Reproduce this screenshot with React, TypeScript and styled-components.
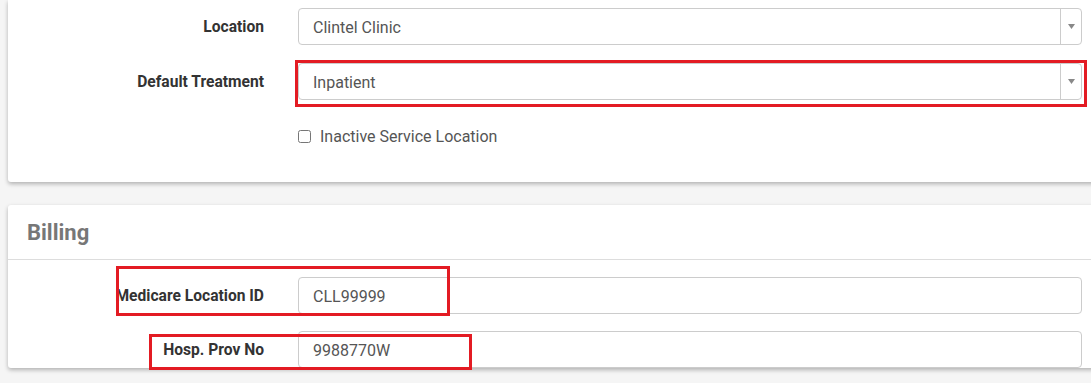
import styled, { createGlobalStyle } from 'styled-components';

const GlobalStyle = createGlobalStyle`
  html, body {
    margin: 0;
    padding: 0;
    background: #f5f5f5;
    overflow: hidden;
    font-family: Roboto, "Liberation Sans", Arial, sans-serif;
  }
`;

interface Row {
  label: string;
  value: string;
  select?: boolean;
}

const locationRows: Row[] = [
  { label: 'Location', value: 'Clintel Clinic', select: true },
  { label: 'Default Treatment', value: 'Inpatient', select: true },
];

const billingRows: Row[] = [
  { label: 'Medicare Location ID', value: 'CLL99999' },
  { label: 'Hosp. Prov No', value: '9988770W' },
];

interface Highlight {
  left: number;
  top: number;
  width: number;
  height: number;
}

const highlights: Highlight[] = [
  { left: 295, top: 60, width: 792, height: 47 },
  { left: 116, top: 266, width: 334, height: 50 },
  { left: 149, top: 334, width: 323, height: 36 },
];

const Field = ({ row }: { row: Row }) => (
  <>
    <Label>{row.label}</Label>
    <Control>
      <span>{row.value}</span>
      {row.select && (
        <Arrow>
          <svg width="7" height="5" viewBox="0 0 7 5">
            <path d="M0 0 L7 0 L3.5 5 Z" fill="#888" />
          </svg>
        </Arrow>
      )}
    </Control>
  </>
);

export default function App() {
  return (
    <Page>
      <GlobalStyle />

      <Card className="top_card">
        <Form>
          {locationRows.map((row) => (
            <Field key={row.label} row={row} />
          ))}
          <span />
          <CheckLine>
            <input type="checkbox" />
            <span>Inactive Service Location</span>
          </CheckLine>
        </Form>
      </Card>

      <Card>
        <CardHeader>Billing</CardHeader>
        <Form $compact>
          {billingRows.map((row) => (
            <Field key={row.label} row={row} />
          ))}
        </Form>
      </Card>

      {highlights.map((h, i) => (
        <RedBox
          key={i}
          style={{ left: h.left, top: h.top, width: h.width, height: h.height }}
        />
      ))}
    </Page>
  );
}

const Page = styled.div`
  position: relative;
  width: 1091px;
  height: 383px;
  padding-left: 8px;
  box-sizing: border-box;
  display: flex;
  flex-direction: column;
  gap: 23px;

  .top_card {
    padding-top: 8px;
    padding-bottom: 27px;
    border-radius: 0 0 3px 3px;
  }
`;

const Card = styled.div`
  width: 1100px;
  background: #fff;
  border-radius: 3px;
  box-shadow: 0 2px 4px rgba(0, 0, 0, 0.28);
  box-sizing: border-box;
`;

const CardHeader = styled.div`
  height: 55px;
  display: flex;
  align-items: center;
  padding-left: 19px;
  box-sizing: border-box;
  border-bottom: 1px solid #ddd;
  font-size: 22px;
  font-weight: 700;
  color: #777;
`;

const Form = styled.div<{ $compact?: boolean }>`
  display: grid;
  grid-template-columns: 256px 784px;
  column-gap: 34px;
  row-gap: ${(p) => (p.$compact ? '17px' : '18px')};
  align-items: center;
  padding-top: ${(p) => (p.$compact ? '17px' : '0')};
`;

const Label = styled.label`
  text-align: right;
  font-size: 15.6px;
  font-weight: 700;
  color: #333;
  white-space: nowrap;
`;

const Control = styled.div`
  position: relative;
  height: 37px;
  box-sizing: border-box;
  border: 1px solid #ccc;
  border-radius: 4px;
  background: #fff;
  display: flex;
  align-items: center;
  padding-left: 14px;
  padding-top: 1px;
  font-size: 16px;
  color: #555;
`;

const Arrow = styled.div`
  position: absolute;
  right: 0;
  top: 0;
  bottom: 0;
  width: 20px;
  border-left: 1px solid #ccc;
  display: flex;
  align-items: center;
  justify-content: center;
`;

const CheckLine = styled.label`
  display: flex;
  align-items: center;
  gap: 9px;
  height: 37px;
  font-size: 16px;
  color: #555;

  input {
    margin: 0;
    width: 13px;
    height: 13px;
  }
`;

const RedBox = styled.div`
  position: absolute;
  box-sizing: border-box;
  border: 3px solid #e31b23;
  pointer-events: none;
`;
